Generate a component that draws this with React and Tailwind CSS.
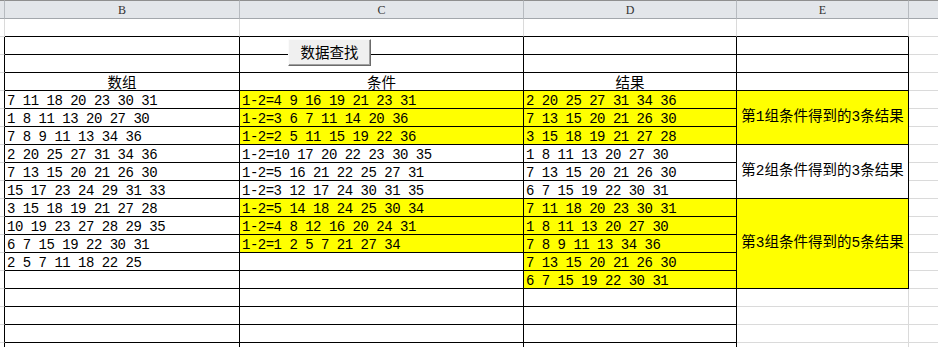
import clsx from 'clsx';

const cols = ['B', 'C', 'D', 'E'];

const numbers = [
  '7 11 18 20 23 30 31',
  '1 8 11 13 20 27 30',
  '7 8 9 11 13 34 36',
  '2 20 25 27 31 34 36',
  '7 13 15 20 21 26 30',
  '15 17 23 24 29 31 33',
  '3 15 18 19 21 27 28',
  '10 19 23 27 28 29 35',
  '6 7 15 19 22 30 31',
  '2 5 7 11 18 22 25',
];

const conditions = [
  ['1-2=4 9 16 19 21 23 31', true],
  ['1-2=3 6 7 11 14 20 36', true],
  ['1-2=2 5 11 15 19 22 36', true],
  ['1-2=10 17 20 22 23 30 35', false],
  ['1-2=5 16 21 22 25 27 31', false],
  ['1-2=3 12 17 24 30 31 35', false],
  ['1-2=5 14 18 24 25 30 34', true],
  ['1-2=4 8 12 16 20 24 31', true],
  ['1-2=1 2 5 7 21 27 34', true],
];

const results = [
  ['2 20 25 27 31 34 36', true],
  ['7 13 15 20 21 26 30', true],
  ['3 15 18 19 21 27 28', true],
  ['1 8 11 13 20 27 30', false],
  ['7 13 15 20 21 26 30', false],
  ['6 7 15 19 22 30 31', false],
  ['7 11 18 20 23 30 31', true],
  ['1 8 11 13 20 27 30', true],
  ['7 8 9 11 13 34 36', true],
  ['7 13 15 20 21 26 30', true],
  ['6 7 15 19 22 30 31', true],
];

// merged cells in column E, keyed by the data row they start on
const groups = {
  0: { text: '第1组条件得到的3条结果', span: 'row-span-3', yellow: true },
  3: { text: '第2组条件得到的3条结果', span: 'row-span-3', yellow: false },
  6: { text: '第3组条件得到的5条结果', span: 'row-span-5', yellow: true },
};

const font = "font-['Liberation_Mono','Noto_Sans_CJK_SC',monospace]";
const cjk = "font-['Noto_Sans_CJK_SC',sans-serif]";
const light = 'border-[#dadada]';

function Box({ className, children }) {
  return <div className={clsx('border-r border-b border-black', className)}>{children}</div>;
}

function Num({ text, yellow }) {
  return (
    <Box className={clsx('flex items-end overflow-hidden whitespace-nowrap pl-[2px] text-[14px] leading-[13px] tracking-[-0.5px]', yellow ? 'bg-[#ffff00]' : 'bg-white')}>
      {text}
    </Box>
  );
}

function Light({ className }) {
  return <div className={clsx('border-b', light, className)} />;
}

export default function App() {
  const dataRows = Array.from({ length: 15 }, (_, i) => i);

  return (
    <div className={clsx('grid h-[347px] w-[938px] overflow-hidden bg-white text-black', font, 'grid-cols-[5px_235px_284px_213px_172px_1fr] grid-rows-[19px] auto-rows-[18px]')}>
      {/* column header */}
      <div className="border-t border-b border-r border-t-[#8f8f8f] border-b-[#a3a7ac] border-r-[#b7bbc0] bg-[#e3e6ea]" />
      {cols.map((c) => (
        <div key={c} className="flex items-center justify-center border-t border-b border-r border-t-[#8f8f8f] border-b-[#a3a7ac] border-r-[#b7bbc0] bg-[#e3e6ea] font-['Liberation_Serif',serif] text-[12px] text-[#333]">
          {c}
        </div>
      ))}
      <div className="border-t border-b border-t-[#8f8f8f] border-b-[#a3a7ac] bg-[#e3e6ea]" />

      {/* row 1 */}
      <Light className="border-r" />
      {cols.map((c) => (
        <div key={c} className={clsx('border-b border-r border-b-black', 'border-r-[#dadada]')} />
      ))}
      <Light />

      {/* rows 2-3, button sits over them */}
      <Light className="border-r border-r-black" />
      <Box />
      <Box className="relative">
        <button
          type="button"
          className={clsx('absolute left-[48px] top-[2px] z-10 flex h-[27px] w-[83px] items-center justify-center border border-t-[#fbfbfb] border-l-[#fbfbfb] border-b-[#6b6b6b] border-r-[#6b6b6b] bg-[#f0f0f0] text-[14.5px] leading-none shadow-[inset_-1px_-1px_0_#a0a0a0]', cjk)}
        >
          数据查找
        </button>
      </Box>
      <Box />
      <Box />
      <Light />

      <Light className="border-r border-r-black" />
      <Box />
      <Box />
      <Box />
      <Box />
      <Light />

      {/* titles */}
      <Light className="border-r border-r-black" />
      {['数组', '条件', '结果'].map((t) => (
        <Box key={t} className={clsx('flex items-end justify-center pb-[1px] text-[14.5px] leading-[15px]', cjk)}>
          {t}
        </Box>
      ))}
      <Box />
      <Light />

      {/* data */}
      {dataRows.map((i) => {
        const g = groups[i];
        return [
          <Light key={`a${i}`} className="border-r border-r-black" />,
          <Num key={`b${i}`} text={numbers[i] || ''} />,
          <Num key={`c${i}`} text={conditions[i]?.[0] || ''} yellow={conditions[i]?.[1]} />,
          <Num key={`d${i}`} text={results[i]?.[0] || ''} yellow={results[i]?.[1]} />,
          g ? (
            <Box key={`e${i}`} className={clsx('flex items-center justify-center whitespace-nowrap text-[14.5px]', g.span, g.yellow ? 'bg-[#ffff00]' : 'bg-white')}>
              {g.text}
            </Box>
          ) : i >= 11 ? (
            <Light key={`e${i}`} className="border-r" />
          ) : null,
          <Light key={`f${i}`} className="col-start-6" />,
        ];
      })}
    </div>
  );
}
